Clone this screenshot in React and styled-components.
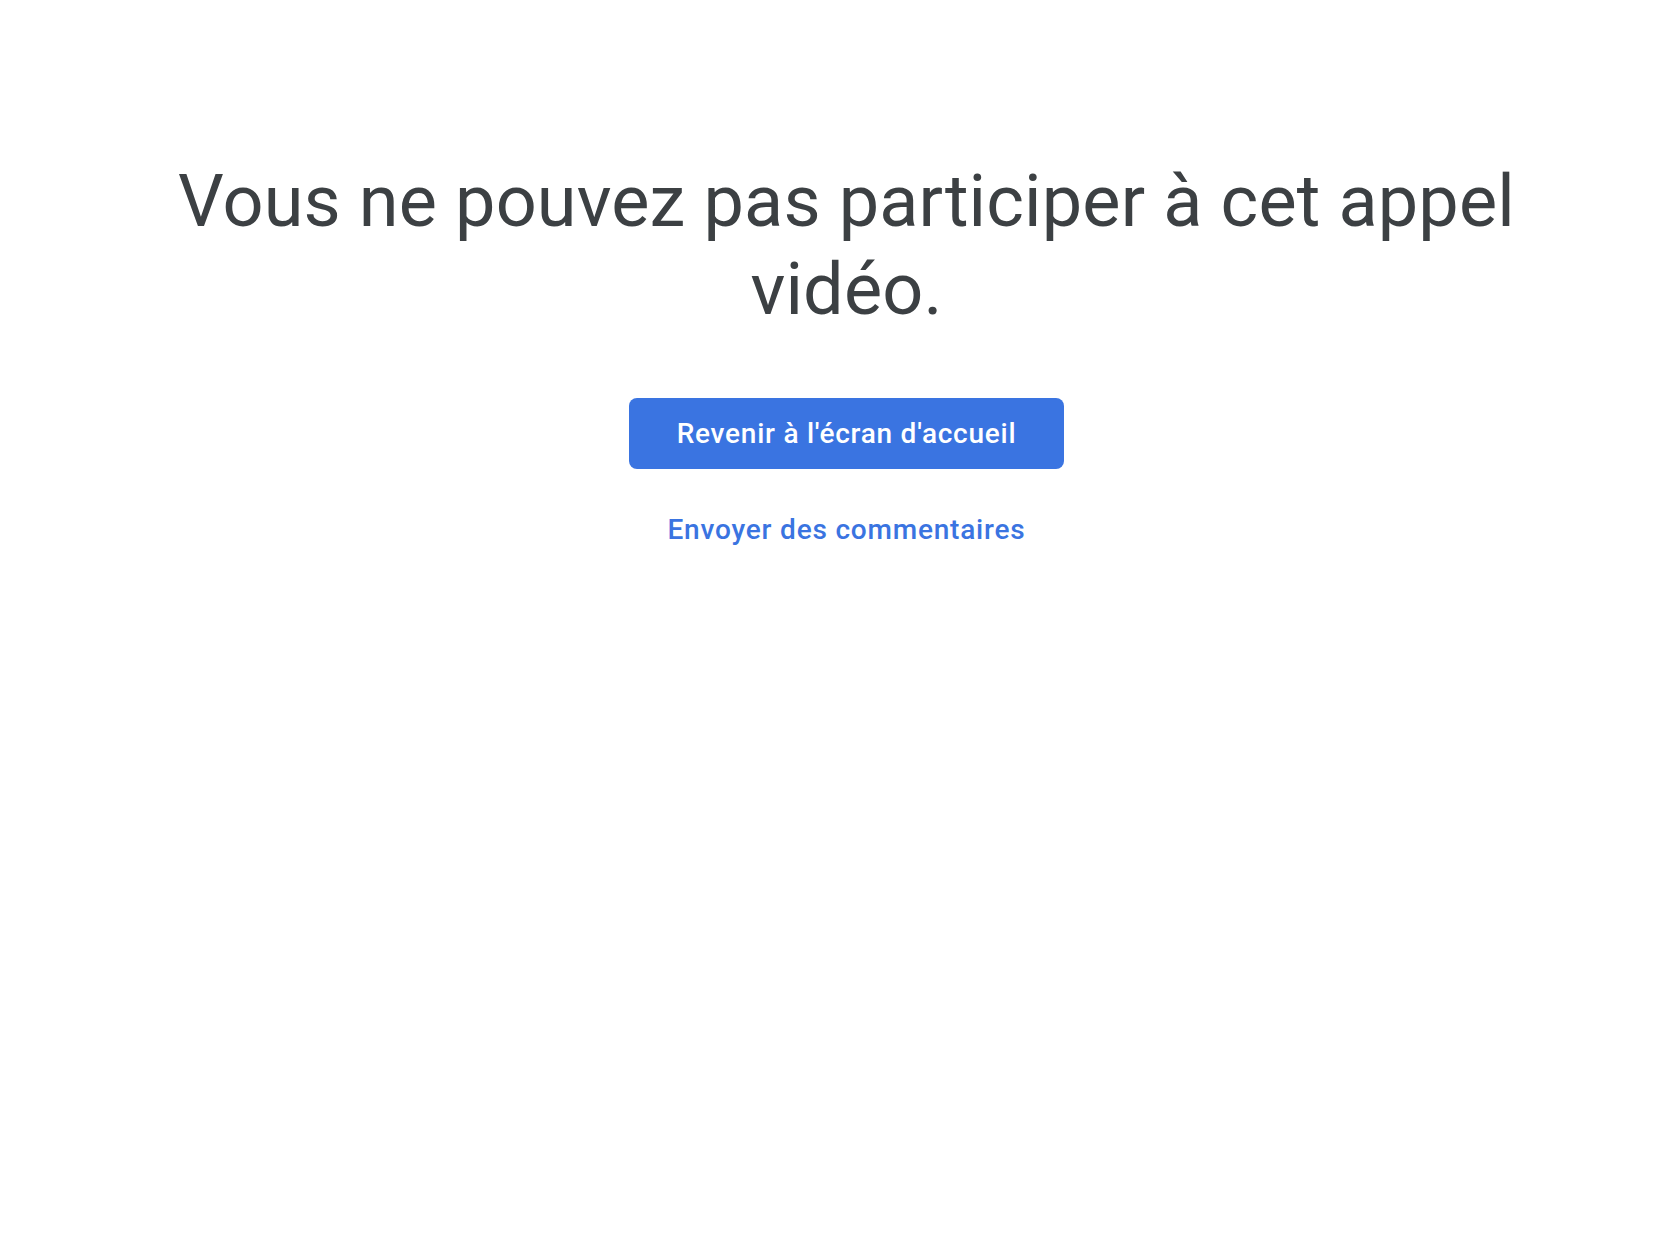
import React from 'react'
import styled, { createGlobalStyle } from 'styled-components'

const GlobalStyle = createGlobalStyle`
  html, body {
    margin: 0;
    padding: 0;
    background: #ffffff;
  }
  body {
    font-family: Roboto, "Open Sans", "Liberation Sans", sans-serif;
  }
`

const Page = styled.main`
  min-height: 1260px;
  display: flex;
  flex-direction: column;
  align-items: center;
  padding: 158px 48px 0 61px;
  box-sizing: border-box;
`

const Title = styled.h1`
  margin: 0;
  max-width: 1400px;
  text-align: center;
  font-size: 72px;
  line-height: 88px;
  font-weight: 400;
  color: #3c4043;
  letter-spacing: 0.15px;
`

const Actions = styled.div`
  display: flex;
  flex-direction: column;
  align-items: center;
  gap: 44px;
  margin-top: 64px;
`

const PrimaryButton = styled.button`
  height: 71px;
  padding: 0 48px;
  border: none;
  border-radius: 8px;
  background: #3a74e1;
  color: #ffffff;
  font-family: inherit;
  font-size: 28px;
  font-weight: 500;
  letter-spacing: 0.75px;
  cursor: pointer;
`

const TextLink = styled.a`
  color: #3a74e1;
  font-size: 28px;
  font-weight: 500;
  letter-spacing: 0.8px;
  text-decoration: none;
  cursor: pointer;
`

const App = () => {
  return (
    <>
      <GlobalStyle />
      <Page>
        <Title>Vous ne pouvez pas participer à cet appel vidéo.</Title>
        <Actions>
          <PrimaryButton>Revenir à l'écran d'accueil</PrimaryButton>
          <TextLink>Envoyer des commentaires</TextLink>
        </Actions>
      </Page>
    </>
  )
}

export default App
